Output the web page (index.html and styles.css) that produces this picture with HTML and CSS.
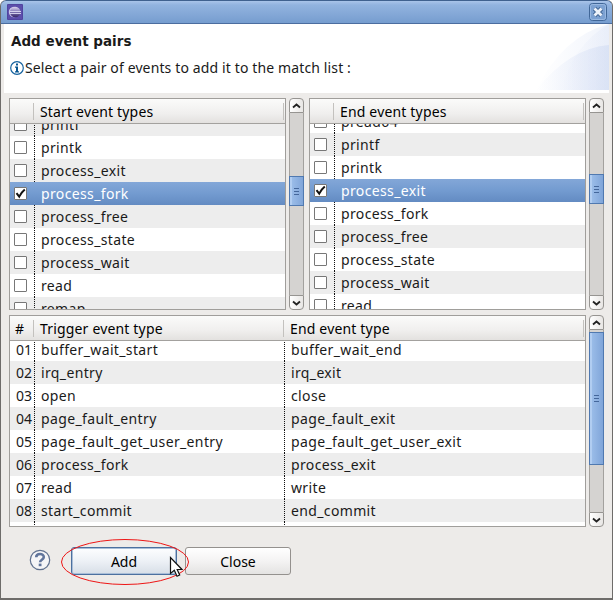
FILE: index.html
```html
<!DOCTYPE html>
<html lang="en">
<head>
<meta charset="utf-8">
<title>Add event pairs</title>
<link rel="stylesheet" href="styles.css">
</head>
<body>
<div class="window">
  <header class="titlebar">
    <svg class="logo" width="16" height="16" viewBox="0 0 16 16">
      <defs><linearGradient id="globe" x2="0" y2="1"><stop stop-color="#ded8f0"/><stop offset=".45" stop-color="#857bb8"/><stop offset="1" stop-color="#352567"/></linearGradient></defs>
      <rect width="16" height="16" rx="1" fill="#5145a0"/><rect x="1" y="1" width="14" height="14" fill="#5c4eab"/>
      <circle cx="7" cy="8" r="5.2" fill="#cfc9ec"/><circle cx="8.2" cy="8" r="5.3" fill="url(#globe)"/>
      <path d="M3 7.5h11M3 9.5h11" stroke="#dcdbf2" stroke-width=".9"/>
    </svg>
    <svg class="close" width="18" height="18" viewBox="0 0 18 18">
      <rect x=".5" y=".5" width="17" height="17" rx="3" fill="#7ca1d2" stroke="#416798"/><rect x="1.5" y="1.5" width="15" height="15" rx="2" fill="none" stroke="#9ab9e1"/>
      <path d="M5.5 5.5l7 7M12.5 5.5l-7 7" stroke="#456997" stroke-width="4.6"/><path d="M5.5 5.5l7 7M12.5 5.5l-7 7" stroke="#edf2fa" stroke-width="2.7"/>
    </svg>
  </header>
  <section class="banner">
    <h1>Add event pairs</h1>
    <p><svg width="14" height="14" viewBox="0 0 14 14"><circle cx="7" cy="7" r="6.3" fill="#fff" stroke="#17639f" stroke-width="1.2"/><path d="M6 2.5h2v2H6zM5 5.5h3v4.7h1v1.2H5v-1.2h1V6.7H5z" fill="#075590"/></svg><span>Select a pair of events to add it to the match list :</span></p>
    <svg class="swoosh" width="73" height="66" viewBox="0 0 73 66">
      <defs><linearGradient id="fade"><stop stop-color="#dae3f7" stop-opacity="0"/><stop offset="1" stop-color="#ced9f2" stop-opacity=".55"/></linearGradient></defs>
      <path d="M0 66Q27 12 73 0v66z" fill="url(#fade)" opacity=".55"/><path d="M25 66Q38 20 73 0v66z" fill="url(#fade)" opacity=".4"/><path d="M0 66Q34 24 73 21v45z" fill="url(#fade)"/>
    </svg>
  </section>
  <main>
    <div class="top">
      <div class="pane left">
        <div class="table">
          <div class="head"><span class="c1"></span><span class="c2">Start event types</span></div>
          <div class="rows odd">
            <div class="row"><i></i><span>printf</span></div>
            <div class="row"><i></i><span>printk</span></div>
            <div class="row"><i></i><span>process_exit</span></div>
            <div class="row sel"><i><svg width="13" height="13"><path d="M2.5 6.2l2.7 3.5Q7 5.8 10.8 2.6" /></svg></i><span>process_fork</span></div>
            <div class="row"><i></i><span>process_free</span></div>
            <div class="row"><i></i><span>process_state</span></div>
            <div class="row"><i></i><span>process_wait</span></div>
            <div class="row"><i></i><span>read</span></div>
            <div class="row"><i></i><span>remap</span></div>
          </div>
        </div>
        <div class="scroll"><b class="up"><svg width="9" height="6"><path d="M1 4.5l3.5-3 3.5 3"/></svg></b><div class="track t1"><div class="thumb"><u></u></div></div><b class="down"><svg width="9" height="6"><path d="M1 1.5l3.5 3 3.5-3"/></svg></b></div>
      </div>
      <div class="pane right">
        <div class="table">
          <div class="head"><span class="c1"></span><span class="c2">End event types</span></div>
          <div class="rows even">
            <div class="row"><i></i><span>pread64</span></div>
            <div class="row"><i></i><span>printf</span></div>
            <div class="row"><i></i><span>printk</span></div>
            <div class="row sel"><i><svg width="13" height="13"><path d="M2.5 6.2l2.7 3.5Q7 5.8 10.8 2.6" /></svg></i><span>process_exit</span></div>
            <div class="row"><i></i><span>process_fork</span></div>
            <div class="row"><i></i><span>process_free</span></div>
            <div class="row"><i></i><span>process_state</span></div>
            <div class="row"><i></i><span>process_wait</span></div>
            <div class="row"><i></i><span>read</span></div>
          </div>
        </div>
        <div class="scroll"><b class="up"><svg width="9" height="6"><path d="M1 4.5l3.5-3 3.5 3"/></svg></b><div class="track t2"><div class="thumb"><u></u></div></div><b class="down"><svg width="9" height="6"><path d="M1 1.5l3.5 3 3.5-3"/></svg></b></div>
      </div>
    </div>
    <div class="pane matches">
      <div class="table">
        <div class="head"><span class="c1">#</span><span class="c2">Trigger event type</span><span class="c3">End event type</span></div>
        <div class="rows even">
          <div class="row"><em>01</em><span>buffer_wait_start</span><span>buffer_wait_end</span></div>
          <div class="row"><em>02</em><span>irq_entry</span><span>irq_exit</span></div>
          <div class="row"><em>03</em><span>open</span><span>close</span></div>
          <div class="row"><em>04</em><span>page_fault_entry</span><span>page_fault_exit</span></div>
          <div class="row"><em>05</em><span>page_fault_get_user_entry</span><span>page_fault_get_user_exit</span></div>
          <div class="row"><em>06</em><span>process_fork</span><span>process_exit</span></div>
          <div class="row"><em>07</em><span>read</span><span>write</span></div>
          <div class="row"><em>08</em><span>start_commit</span><span>end_commit</span></div>
          <div class="row"><em></em><span></span><span></span></div>
        </div>
      </div>
      <div class="scroll"><b class="up"><svg width="9" height="6"><path d="M1 4.5l3.5-3 3.5 3"/></svg></b><div class="track t3"><div class="thumb"><u></u></div></div><b class="down"><svg width="9" height="6"><path d="M1 1.5l3.5 3 3.5-3"/></svg></b></div>
    </div>
  </main>
  <footer>
    <svg class="help" width="22" height="22" viewBox="0 0 22 22"><circle cx="11" cy="11" r="9.7" fill="#f5f5f7" stroke="#60718f" stroke-width="1.2"/><path d="M7.2 8.3C7.3 4 14.8 4 14.8 8c0 2.7-3.7 2.8-3.7 5.3" fill="none" stroke="#61759c" stroke-width="2.6"/><path d="M9.7 14.6h2.8v2.6H9.7z" fill="#61759c"/></svg>
    <button class="add">Add</button>
    <button>Close</button>
    <svg class="mark" width="132" height="50" viewBox="0 0 132 50"><ellipse cx="66" cy="25" rx="63.5" ry="22.5" fill="none" stroke="#ed1515"/><path d="M111.5 20.5v16l3.8-3.2 2.7 6 2.7-1.3-2.5-5.5h4.8z" fill="#fff" stroke="#111" stroke-width="1.2"/></svg>
  </footer>
</div>
</body>
</html>
```

FILE: styles.css
```css
* { box-sizing: border-box; }
body { margin: 0; background: #fff; font: 14px/23px "Noto Sans", "Open Sans", sans-serif; color: #1a1a1a; }
.window { width: 613px; height: 600px; background: #edebe9; border: solid #6e6c6a; border-width: 0 1px 2px; border-radius: 6px 6px 0 0; overflow: hidden; display: flex; flex-direction: column; }
.titlebar { height: 24px; flex: none; display: flex; justify-content: space-between; padding: 4px 5px 0 6px; margin: 0 -1px; border: 1px solid #40618f; border-bottom-color: #4b6d9f; border-radius: 6px 6px 0 0; background: linear-gradient(#a9c4e9, #92b3df 4px, #769dcf); }
.titlebar .close { margin-top: -2px; }
.titlebar svg { flex: none; }
.titlebar .logo { margin-top: -1px; }
.banner { height: 69px; flex: none; margin: 0 3px; background: #fff; position: relative; padding: 7px 7px 0; }
h1 { margin: 0; font: bold 13.5px/20px "DejaVu Sans", sans-serif; }
.banner p { margin: 5px 0 0 -1px; display: flex; align-items: center; height: 23px; letter-spacing: .13px; }
.banner p svg { flex: none; margin-right: 1px; }
.swoosh { position: absolute; right: 0; top: 0; }
main { padding: 5px 8px 0; flex: none; }
.top { display: flex; gap: 5px; height: 212px; }
.pane { display: flex; gap: 3px; height: 212px; }
.left { width: 295px; }
.right { width: 295px; }
.matches { margin-top: 5px; width: 595px; }
.table { flex: 1; border: 1px solid #a09e9b; background: #fff; overflow: hidden; display: flex; flex-direction: column; position: relative; }
.head { height: 25px; flex: none; display: flex; align-items: center; color: #000; letter-spacing: .17px; border-bottom: 1px solid #a3a19e; background: linear-gradient(#fbfbfa, #f0efee 60%, #e3e1df); position: relative; z-index: 1; }
.head::after { content: ""; width: 1px; height: 17px; background: #c3c1be; margin-left: auto; margin-right: 1px; }
.head span { line-height: 22px; padding: 2px 0 0 6px; }
.c1 { width: 24px; height: 17px; border-right: 1px solid #c3c1be; display: flex; align-items: center; }
.head .c1 { padding-left: 5px; }
.matches .head .c2 { width: 250px; height: 17px; border-right: 1px solid #c3c1be; display: flex; align-items: center; }
.left .rows { margin-top: -11px; }
.right .rows { margin-top: -14px; }
.matches .rows { margin-top: -3px; }
.row { height: 23px; display: flex; align-items: center; }
.row span { padding-left: 7px; line-height: 23px; white-space: pre; letter-spacing: .36px; }
.odd .row:nth-child(odd), .even .row:nth-child(even) { background: #ededed; }
.rows .row.sel { background: linear-gradient(#83a7d8, #739bd0 50%, #638bc2); color: #fff; }
.row i { width: 13px; height: 13px; flex: none; margin: 0 7px 0 4px; border: 1px solid #777; border-radius: 1px; background: #fff; }
.row i svg { display: block; margin: -1px; fill: none; stroke: #111; stroke-width: 2; }
.row i + span, .row em + span, .row em + span + span { height: 23px; background: repeating-linear-gradient(#111 0 1px, transparent 1px 2px) left / 1px 100% no-repeat; }
.row.sel i + span { background: none; }
.row em { font-style: normal; width: 24px; flex: none; padding-left: 6px; height: 23px; }
.matches .row em + span { width: 250px; }
.scroll { width: 15px; height: 212px; display: flex; flex-direction: column; }
.scroll b { height: 15px; flex: none; border: 1px solid #969491; background: linear-gradient(90deg, #fff, #e8e6e4); display: flex; align-items: center; justify-content: center; }
.scroll b svg { fill: none; stroke: #222; stroke-width: 1.8; }
.scroll .up { border-radius: 4px 4px 0 0; }
.scroll .down { border-radius: 0 0 4px 4px; }
.track { flex: 1; background: #d5d3d1; border: solid #a3a19e; border-width: 0 1px; }
.thumb { margin: 0 -1px; height: 30px; border: 1px solid #5079b0; background: linear-gradient(90deg, #b1cdf1 2px, #9abce8 2px, #80a5d9); display: flex; align-items: center; justify-content: center; }
.thumb u { width: 5px; height: 7px; background: repeating-linear-gradient(#44679b 0 1px, transparent 1px 3px); }
.t1 { padding-top: 63px; }
.t2 { padding-top: 61px; }
.t3 { padding-top: 2px; }
.t3 .thumb { height: 133px; }
footer { flex: 1; display: flex; padding: 20px 0 0 28px; position: relative; }
.help { margin: 2px 20px 0 0; flex: none; }
button { width: 106px; height: 28px; padding: 0; margin-right: 8px; font: inherit; color: #000; border: 1px solid #94918e; border-radius: 3px; background: linear-gradient(#fff, #f4f3f3 50%, #e4e3e2); }
.add { border: 1px solid #4c709f; box-shadow: inset 0 0 0 1px #a9bed8; background: linear-gradient(#fdfeff, #edf1f6 50%, #d7dee7); }
.mark { position: absolute; left: 58px; top: 10px; }
```
